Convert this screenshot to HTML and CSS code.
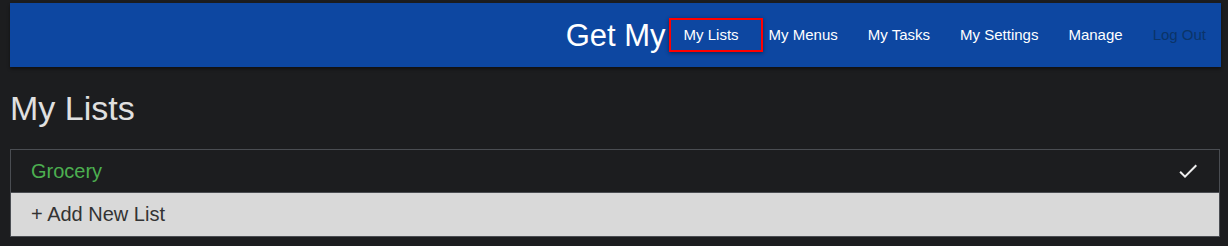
FILE: index.html
```html
<!DOCTYPE html>
<html lang="en">
<head>
<meta charset="utf-8">
<title>Get My - My Lists</title>
<link rel="stylesheet" href="styles.css">
</head>
<body>
<header class="topbar">
  <span class="brand">Get My</span>
  <nav class="nav">
    <a class="nav-link active" href="#">My Lists</a>
    <a class="nav-link" href="#">My Menus</a>
    <a class="nav-link" href="#">My Tasks</a>
    <a class="nav-link" href="#">My Settings</a>
    <a class="nav-link" href="#">Manage</a>
    <a class="nav-link logout" href="#">Log Out</a>
  </nav>
</header>
<main class="content">
  <h1 class="page-title">My Lists</h1>
  <div class="list-group">
    <div class="list-item">
      <span class="list-name">Grocery</span>
      <svg class="check" viewBox="0 0 24 24" width="24" height="24" aria-hidden="true"><path d="M9 16.17L4.83 12l-1.42 1.41L9 19 21 7l-1.41-1.41z" fill="#eeeeee"/></svg>
    </div>
    <div class="list-item add-item">+ Add New List</div>
  </div>
</main>
</body>
</html>
```
FILE: styles.css
```css
html, body {
  margin: 0;
  padding: 0;
  background: #1c1d1f;
}
body {
  font-family: "Liberation Sans", Arial, sans-serif;
  padding: 3px 7px 0 10px;
}
.topbar {
  height: 64px;
  background: #0d47a1;
  display: flex;
  align-items: center;
  justify-content: flex-end;
  box-shadow: 0 2px 3px rgba(0, 0, 0, 0.45);
}
.brand {
  color: #ffffff;
  font-size: 31px;
  margin-right: 3px;
  line-height: 34px;
  padding-top: 2px;
}
.nav {
  display: flex;
  align-items: center;
}
.nav-link {
  position: relative;
  display: block;
  color: #ffffff;
  text-decoration: none;
  font-size: 15px;
  line-height: 18px;
  padding: 8px 15px;
}
.nav-link.active::after {
  content: "";
  position: absolute;
  left: 0;
  top: 0;
  right: -9px;
  bottom: 0;
  border: 2px solid #ff0000;
  box-shadow: 0 1px 4px rgba(0, 0, 0, 0.45);
}
.nav-link.logout {
  color: #0b3468;
}
.content {
  margin-right: 1px;
}
.page-title {
  margin: 22px 0 21px 0;
  font-size: 34px;
  font-weight: normal;
  color: #e0e0e0;
  line-height: 39px;
}
.list-group {
  border: 1px solid #4a4d52;
}
.list-item {
  height: 42px;
  display: flex;
  align-items: center;
  justify-content: space-between;
  padding: 0 20px;
  font-size: 20px;
  line-height: 23px;
}
.list-name {
  color: #4caf50;
}
.check {
  display: block;
  margin-right: -1px;
}
.add-item {
  height: 43px;
  border-top: 1px solid #4a4d52;
  background: #d9d9d9;
  color: #333333;
}
```
